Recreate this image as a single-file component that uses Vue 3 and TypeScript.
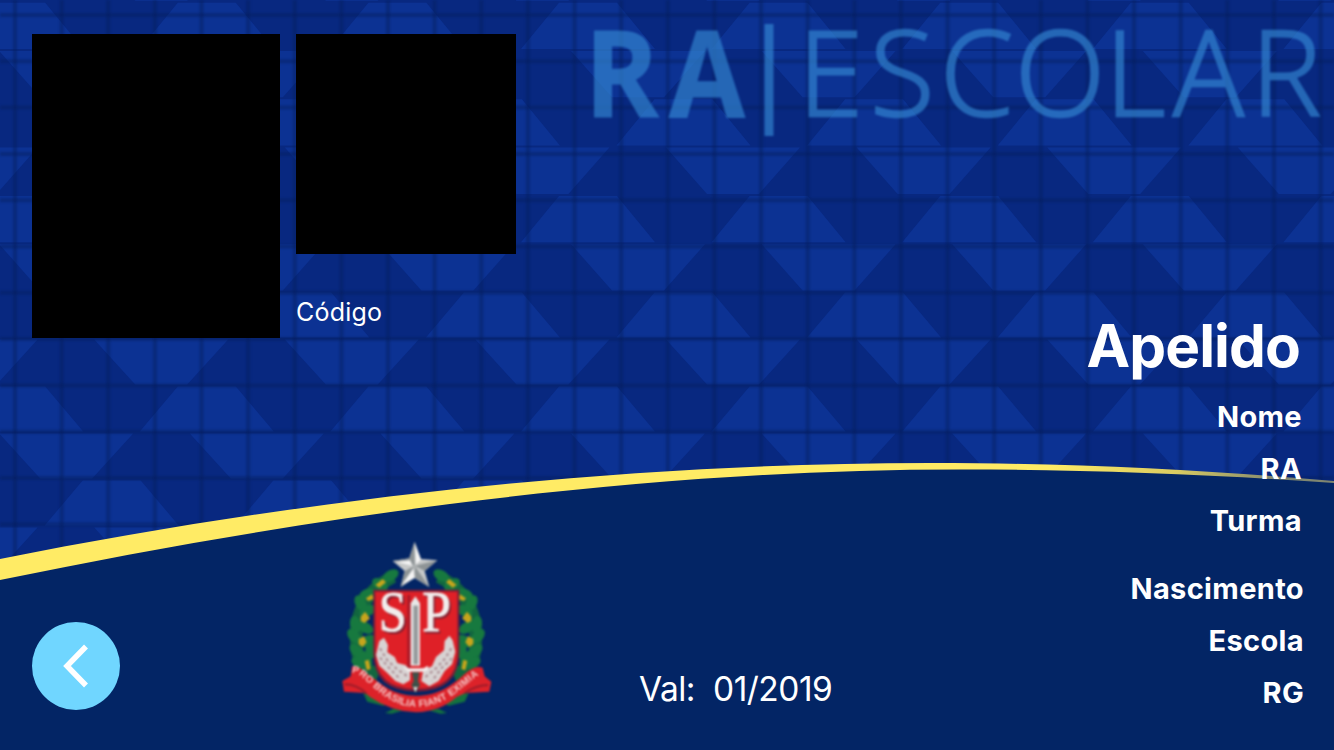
<script setup lang="ts">
interface Leaf {
  x: number
  y: number
  angle: number
}

const PITCH_X = 190.6

const facets: string[] = []
for (let row = -7; row <= 5; row++) {
  const pitch = row < 0 ? 48.3 : 47
  const top = 291 + row * pitch
  const kind = ((row % 4) + 4) % 4
  const offset = [683.5, 733, 588, 638][kind]
  const up = kind % 2 === 0
  for (let col = -5; col <= 5; col++) {
    const c = offset + col * PITCH_X
    const a = up ? 29 : 67
    const b = up ? 67 : 26
    const y1 = top + 1.5
    const y2 = top + pitch - 0.5
    facets.push(`M${c - a} ${y1}H${c + a}L${c + b} ${y2}H${c - b}Z`)
  }
}
const facetPath = facets.join('')

const columns: number[] = Array.from({ length: 29 }, (_, i) => 15 + i * 46.63)
const rows: number[] = Array.from({ length: 13 }, (_, i) => 15 + i * 46.3)

const leaves: Leaf[] = [
  { x: 182, y: 122, angle: -30 }, { x: 150, y: 148, angle: 30 }, { x: 112, y: 178, angle: -20 },
  { x: 92, y: 205, angle: 60 }, { x: 112, y: 228, angle: -30 }, { x: 76, y: 268, angle: 80 },
  { x: 106, y: 278, angle: 30 }, { x: 72, y: 304, angle: 50 }, { x: 112, y: 318, angle: -30 },
  { x: 80, y: 348, angle: 45 }, { x: 108, y: 372, angle: 60 }, { x: 122, y: 345, angle: 80 },
  { x: 88, y: 384, angle: 30 },
]

const people: string[] = ['Nome', 'RA', 'Turma']
const records: string[] = ['Nascimento', 'Escola', 'RG']
</script>

<template>
  <main class="card">
    <svg class="backdrop" viewBox="0 0 1334 750" aria-hidden="true">
      <defs>
        <linearGradient id="stripe-fill" gradientUnits="userSpaceOnUse" x1="1050" y1="0" x2="1280" y2="0">
          <stop offset="0" stop-color="#ffeb65" />
          <stop offset=".55" stop-color="#d9cb62" />
          <stop offset="1" stop-color="#7f8670" />
        </linearGradient>
      </defs>
      <rect width="1334" height="750" fill="#082880" />
      <path :d="facetPath" fill="#0c3293" class="facets" />
      <g class="grid-lines">
        <path v-for="x in columns" :key="'c' + x" :d="`M${x} 0V600`" />
        <path v-for="y in rows" :key="'r' + y" :d="`M0 ${y}H1334`" />
      </g>
      <g class="brand">
        <g class="brand-bold">
          <text y="117" transform="translate(584.5 0) scale(.93 1)">R</text>
          <text y="117" transform="translate(669 0) scale(.91 1)">A</text>
        </g>
        <rect x="764.5" y="24" width="9" height="112" />
        <text class="brand-light" y="115.500" x="798 870 940 1015 1105 1173 1251">ESCOLAR</text>
      </g>
      <path
        d="M0 570C300 504 620 465 930 465C1080 465 1210 472 1334 482V750H0Z"
        fill="#032565"
      />
      <path
        d="M0 559C300 499 620 463 930 463C1080 463 1210 470.5 1334 481V483C1210 474.500 1090 469.500 960 469.500C640 469.500 310 516 0 580Z"
        fill="url(#stripe-fill)"
        class="stripe"
      />
    </svg>

    <section class="left">
      <div class="media">
        <div class="photo"></div>
        <div class="code">
          <div class="code-box"></div>
          <span class="code-label">Código</span>
        </div>
      </div>

      <div class="footer">
        <button class="back" type="button" aria-label="Voltar">
          <svg viewBox="0 0 88 88">
            <path d="M54 24.500L35 44L54 63.500" />
          </svg>
        </button>

        <svg class="crest" viewBox="0 0 510 570" role="img" aria-label="São Paulo">
          <g v-for="side in [0, 1]" :key="side" :transform="side ? 'translate(516 0) scale(-1 1)' : ''">
            <path d="M190 125Q60 190 82 350Q90 400 145 420" fill="none" stroke="#12663f" stroke-width="38" />
            <ellipse
              v-for="(leaf, i) in leaves"
              :key="i"
              :cx="leaf.x"
              :cy="leaf.y"
              rx="26"
              ry="16"
              fill="#17793f"
              :transform="`rotate(${leaf.angle} ${leaf.x} ${leaf.y})`"
            />
            <g fill="#c6a51c">
              <path d="M136 150L158 132L168 142L148 158Z" />
              <path d="M108 190L126 178L132 192L114 198Z" />
              <path d="M92 245L105 230L120 250L104 264L92 258Z" />
              <path d="M86 312L102 304L110 322L98 336L86 328Z" />
              <path d="M104 378L116 374L122 402L110 406Z" />
            </g>
            <path d="M100 475L145 478L185 500L160 512L112 500Z" fill="#14733f" />
            <path d="M165 534L190 522L220 526L185 536Z" fill="#14733f" />
          </g>

          <path d="M130 164H388V352Q388 470 258 470Q130 470 130 352Z" fill="#7c1d36" />
          <path d="M136 170H382V350Q382 461 258 461Q136 461 136 350Z" fill="#df2027" />
          <path d="M232 180H241V400H232Z" fill="#a71928" />

          <g class="monogram">
            <text class="shade" x="152" y="293" textLength="84" lengthAdjust="spacingAndGlyphs">S</text>
            <text class="shade" x="282" y="293" textLength="86" lengthAdjust="spacingAndGlyphs">P</text>
            <text x="146" y="287" textLength="84" lengthAdjust="spacingAndGlyphs">S</text>
            <text x="277" y="287" textLength="86" lengthAdjust="spacingAndGlyphs">P</text>
          </g>

          <g fill="#d8d3d3">
            <path d="M148 318L162 308L174 330L172 352L194 366L202 384L226 390L240 405V436L220 448L196 438L172 414L148 392L138 360Z" />
            <path d="M358 302L368 316L376 350L366 388L344 408L326 438L298 454L274 438L280 404L306 394L318 366L342 346L344 318Z" />
          </g>
          <g class="grain">
            <path d="M150 340L172 376L198 400L232 424M150 368L180 402L212 434" />
            <path d="M364 340L344 372L318 400L284 428M366 370L334 400L306 438" />
          </g>

          <path d="M242 205L256 184L270 205V392H242Z" fill="#e7e7e7" />
          <path d="M250 212H264V388H250Z" fill="#969a9c" />
          <path d="M218 396L234 400H280L294 392V406L278 410H234Z" fill="#f3eeee" />
          <path d="M246 412H268L264 438L270 450L256 474L244 450L251 438Z" fill="#3e5149" />
          <path d="M250 456H263L256 472Z" fill="#e7e2e2" />

          <path
            d="M66 394Q84 390 106 412C160 452 190 482 258 482C326 482 364 452 412 410Q438 390 458 398L464 424L484 440L478 470L406 474L380 486Q330 530 258 532Q184 530 120 486L106 474L42 470L37 438L62 424Z"
            fill="#dd2229"
          />
          <path d="M44 448Q80 448 110 476M474 450Q440 450 404 474" class="fold" />
          <path id="motto-arc" d="M66 416C92 396 150 516 262 516C366 516 430 414 464 414" fill="none" />
          <text class="motto">
            <textPath href="#motto-arc" textLength="440" lengthAdjust="spacing">PRO BRASILIA FIANT EXIMIA</textPath>
          </text>

          <path d="M254 20L273 72L322 76L284 108L298 156L254 129L212 156L224 108L188 78L238 70Z" fill="#c7c9c9" />
          <path
            d="M254 20V92L238 70ZM322 76L254 92L284 108ZM298 156L254 92V129ZM212 156L254 92L224 108ZM188 78L254 92L238 70Z"
            fill="#8e9496"
          />
          <path d="M254 26L258 88L273 74ZM196 80L248 92L240 76ZM216 148L250 102L254 128Z" fill="#f5f5f5" />
        </svg>

        <p class="validity"><span>Val:</span><span>01/2019</span></p>
      </div>
    </section>

    <section class="info">
      <h1>Apelido</h1>
      <ul class="people">
        <li v-for="item in people" :key="item">{{ item }}</li>
      </ul>
      <ul class="records">
        <li v-for="item in records" :key="item">{{ item }}</li>
      </ul>
    </section>
  </main>
</template>

<style>
body {
  margin: 0;
  overflow: hidden;
}
</style>

<style scoped>
.card {
  position: relative;
  display: flex;
  justify-content: space-between;
  box-sizing: border-box;
  width: 1334px;
  height: 750px;
  padding: 34px 31px 25px 32px;
  overflow: hidden;
  background: #032565;
  color: #fff;
  font-family: Inter, "Liberation Sans", sans-serif;
}

.backdrop {
  position: absolute;
  inset: 0;
  width: 1334px;
  height: 750px;
}

.facets {
  filter: blur(0.6px);
}

.grid-lines {
  fill: none;
  stroke: #04205f;
  stroke-opacity: 0.45;
  stroke-width: 4;
  filter: blur(0.9px);
}

.stripe {
  filter: blur(0.7px);
}

.brand {
  fill: #3488d3;
  stroke: #3488d3;
  stroke-width: 0;
  opacity: 0.66;
  filter: blur(0.8px);
  font-family: "Open Sans", sans-serif;
  font-size: 121px;
}

.brand-bold {
  font-weight: 700;
  stroke-width: 1px;
}

.brand-light {
  font-size: 118px;
  font-weight: 300;
  stroke-width: 2.4px;
}

.left {
  position: relative;
  display: flex;
  flex-direction: column;
  justify-content: space-between;
}

.media {
  display: flex;
  gap: 16px;
}

.photo {
  width: 248px;
  height: 304px;
  background: #000;
}

.code {
  display: flex;
  flex-direction: column;
  gap: 43px;
}

.code-box {
  width: 220px;
  height: 220px;
  background: #000;
}

.code-label {
  font-size: 25px;
  line-height: 30px;
  letter-spacing: 0.2px;
}

.footer {
  display: flex;
  align-items: flex-end;
}

.back {
  width: 88px;
  height: 88px;
  margin: 0 210px 15px 0;
  padding: 0;
  border: 0;
  border-radius: 50%;
  background: #70d6ff;
}

.back svg {
  display: block;
}

.back path {
  fill: none;
  stroke: #fff;
  stroke-width: 5.5;
}

.crest {
  width: 170px;
  height: 190px;
  filter: blur(0.9px);
}

.monogram {
  fill: #f1eded;
  font: 168px "Liberation Serif", serif;
  stroke: #f1eded;
  stroke-width: 3;
}

.monogram .shade {
  fill: #852030;
  stroke: #852030;
}

.grain {
  fill: none;
  stroke: #a98990;
  stroke-width: 6;
  stroke-dasharray: 9 9;
}

.fold {
  fill: none;
  stroke: #9c1c2a;
  stroke-width: 6;
}

.motto {
  fill: #f4c8c8;
  font: bold 30px "Liberation Sans", sans-serif;
}

.validity {
  display: flex;
  gap: 18px;
  margin: 0 0 15px 139px;
  font-size: 33.5px;
  line-height: 42px;
  letter-spacing: -0.5px;
}

.info {
  position: relative;
  display: flex;
  flex-direction: column;
  align-items: flex-end;
  padding-top: 277px;
}

h1 {
  margin: 0 3px 0 0;
  font-size: 58.5px;
  font-weight: 700;
  line-height: 70px;
  letter-spacing: -0.9px;
}

ul {
  display: flex;
  flex-direction: column;
  align-items: flex-end;
  gap: 16px;
  margin: 0;
  padding: 0;
  list-style: none;
  font-size: 29px;
  font-weight: 650;
  line-height: 36px;
  letter-spacing: 0.35px;
}

.people {
  margin: 18px 1px 0 0;
}

.records {
  margin: 32px -1px 0 0;
}
</style>
